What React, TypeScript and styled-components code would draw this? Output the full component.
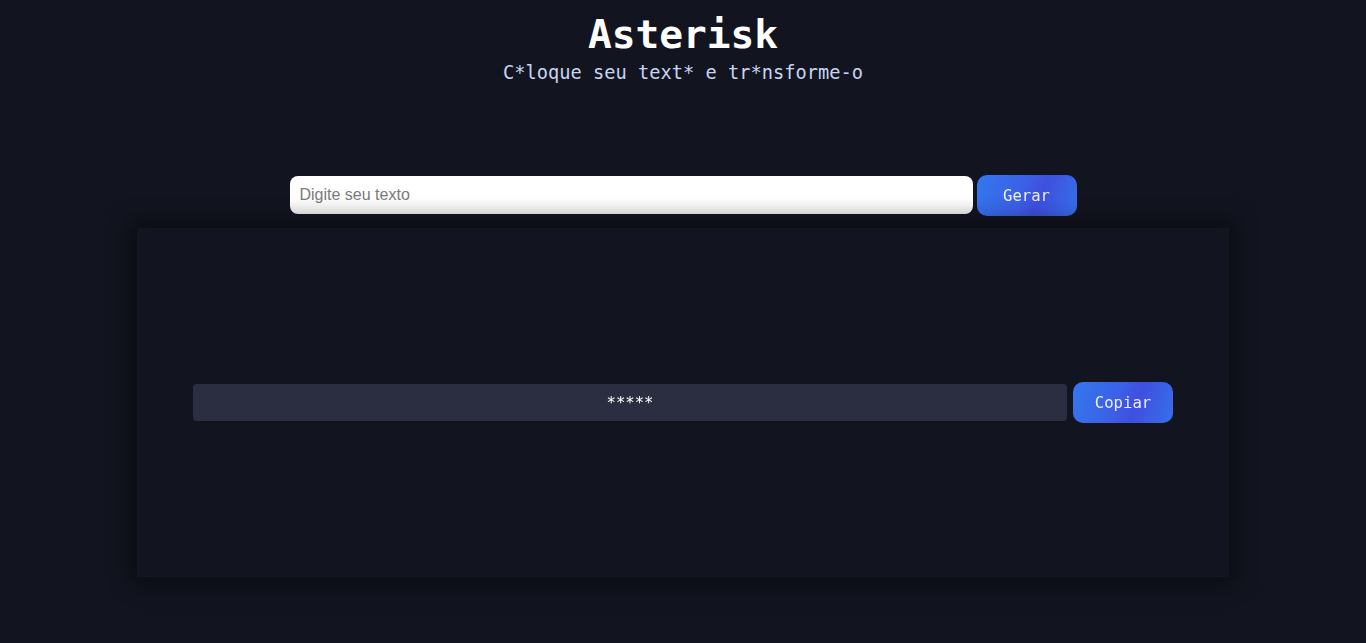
import React, { useState } from "react";
import styled, { createGlobalStyle } from "styled-components";

const GlobalStyle = createGlobalStyle`
  html, body {
    margin: 0;
    padding: 0;
    background: #12141f;
  }
  body {
    font-family: "DejaVu Sans Mono", "Liberation Mono", monospace;
  }
`;

const Page = styled.main`
  min-height: 100vh;
  display: flex;
  flex-direction: column;
  align-items: center;
  padding-top: 10px;
  box-sizing: border-box;
`;

const Title = styled.h1`
  margin: 0;
  font-size: 39.5px;
  line-height: 48px;
  font-weight: 700;
  color: #ffffff;
`;

const Subtitle = styled.p`
  margin: 4px 0 0;
  font-size: 18.7px;
  line-height: 22px;
  color: #c9d4f2;
`;

const InputRow = styled.form`
  margin-top: 91px;
  display: flex;
  align-items: flex-start;
  gap: 4px;
`;

const TextInput = styled.input`
  margin-top: 1px;
  width: 683px;
  height: 38px;
  box-sizing: border-box;
  border: none;
  outline: none;
  border-radius: 8px;
  padding: 0 10px;
  font-family: "Liberation Sans", Arial, sans-serif;
  font-size: 16px;
  color: #222;
  background: linear-gradient(180deg, #ffffff 0%, #ffffff 60%, #ededed 100%);
  caret-color: #000;

  &::placeholder {
    color: #7a7a7a;
  }
`;

const ActionButton = styled.button`
  width: 100px;
  height: 41px;
  border: none;
  border-radius: 10px;
  font-family: "DejaVu Sans Mono", "Liberation Mono", monospace;
  font-size: 15.6px;
  color: #eef0ff;
  cursor: pointer;
  background: linear-gradient(110deg, #3478ee 0%, #3b5fe6 45%, #3f4fdf 62%, #3670ea 100%);
`;

const Panel = styled.section`
  margin-top: 12px;
  width: 1092px;
  height: 349px;
  background: #121420;
  box-shadow: 0 0 22px 6px rgba(0, 0, 0, 0.45);
  display: flex;
  align-items: center;
  justify-content: center;
  gap: 6px;
`;

const Output = styled.div`
  width: 874px;
  height: 37px;
  border-radius: 4px;
  background: #2b2e40;
  color: #ffffff;
  font-size: 15.6px;
  display: flex;
  align-items: center;
  justify-content: center;
`;

const mask = (s: string) => s.replace(/./g, "*");

export default function App() {
  const [text, setText] = useState("");
  const [result, setResult] = useState("*****");

  return (
    <>
      <GlobalStyle />
      <Page>
        <Title>Asterisk</Title>
        <Subtitle>C*loque seu text* e tr*nsforme-o</Subtitle>
        <InputRow
          onSubmit={(e) => {
            e.preventDefault();
            if (text) setResult(mask(text));
          }}
        >
          <TextInput
            autoFocus
            placeholder="Digite seu texto"
            value={text}
            onChange={(e) => setText(e.target.value)}
          />
          <ActionButton type="submit">Gerar</ActionButton>
        </InputRow>
        <Panel>
          <Output>{result}</Output>
          <ActionButton onClick={() => navigator.clipboard?.writeText(result)}>
            Copiar
          </ActionButton>
        </Panel>
      </Page>
    </>
  );
}
